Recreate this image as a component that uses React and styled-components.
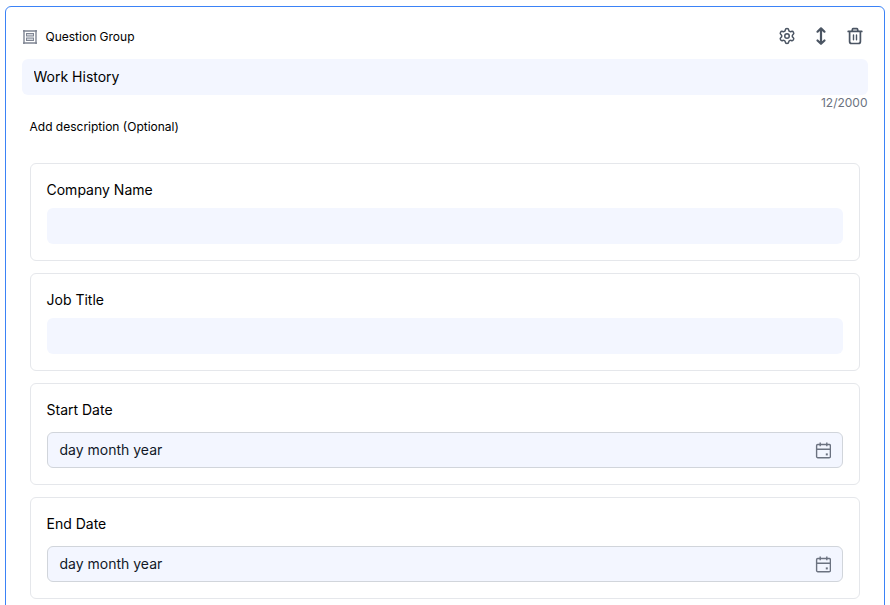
import { useState } from "react";
import styled, { createGlobalStyle } from "styled-components";
import { Settings } from "lucide-react";

const MAX_LENGTH = 2000;

const QUESTIONS = [
  { id: "company", label: "Company Name", type: "text" },
  { id: "title", label: "Job Title", type: "text" },
  { id: "start", label: "Start Date", type: "date" },
  { id: "end", label: "End Date", type: "date" },
];

function GroupIcon() {
  return (
    <svg width="14" height="14" viewBox="0 0 14 14" fill="none" stroke="#7f8593">
      <path d="M0 1h14M0 13h14M1 0v14M13 0v14" strokeWidth="1.4" />
      <rect x="3.5" y="3.5" width="7" height="2.5" fill="#d3d6dc" />
      <rect x="3.5" y="8" width="7" height="2.5" fill="#d3d6dc" />
    </svg>
  );
}

function MoveIcon() {
  return (
    <svg
      width="20"
      height="20"
      viewBox="0 0 20 20"
      fill="none"
      stroke="currentColor"
      strokeWidth="2.2"
      strokeLinecap="round"
      strokeLinejoin="round"
    >
      <path d="M10 2.8v14.6M6.5 5.7 10 2.4l3.5 3.3M6.5 14.5l3.5 3.3 3.5-3.3" />
    </svg>
  );
}

function TrashIcon() {
  return (
    <svg
      width="20"
      height="20"
      viewBox="0 0 20 20"
      fill="none"
      stroke="currentColor"
      strokeWidth="1.7"
      strokeLinecap="round"
      strokeLinejoin="round"
    >
      <path d="M3.2 5.4h13.6M7 5.2l.5-2.1q.2-.5.7-.5h3.6q.5 0 .7.5l.5 2.1" />
      <path d="M4.6 5.8v9.7q0 2 2 2h6.8q2 0 2-2V5.8" />
      <path d="M8.5 9v4.8M11.5 9v4.8" strokeWidth="1.4" />
    </svg>
  );
}

function CalendarIcon() {
  return (
    <svg width="16" height="17" viewBox="0 0 16 17" fill="none" stroke="#6b7280" strokeWidth="1.4">
      <rect x="1.6" y="2.5" width="13.8" height="13.2" rx="1.2" />
      <path d="M1.6 7.3h13.8M5.2 0.6v3.7M11.8 0.6v3.7" />
      <rect x="10.8" y="11.4" width="2" height="2" fill="#6b7280" stroke="none" />
    </svg>
  );
}

function Question({ label, type }) {
  return (
    <QuestionCard>
      <Label>{label}</Label>
      {type === "date" ? (
        <DateField>
          <DateText>day month year</DateText>
          <CalendarIcon />
        </DateField>
      ) : (
        <TextField aria-label={label} />
      )}
    </QuestionCard>
  );
}

function App() {
  const [title, setTitle] = useState("Work History");

  return (
    <>
      <GlobalStyle />
      <Group>
        <Header>
          <GroupIcon />
          <GroupName>Question Group</GroupName>
          <Actions>
            <IconButton type="button" aria-label="Settings">
              <Settings size={18} />
            </IconButton>
            <IconButton type="button" aria-label="Move">
              <MoveIcon />
            </IconButton>
            <IconButton type="button" aria-label="Delete">
              <TrashIcon />
            </IconButton>
          </Actions>
        </Header>
        <TitleInput
          aria-label="Title"
          value={title}
          maxLength={MAX_LENGTH}
          onChange={(e) => setTitle(e.target.value)}
        />
        <Counter>
          {title.length}/{MAX_LENGTH}
        </Counter>
        <Description>Add description (Optional)</Description>
        <QuestionList>
          {QUESTIONS.map((q) => (
            <Question key={q.id} label={q.label} type={q.type} />
          ))}
        </QuestionList>
      </Group>
    </>
  );
}

const GlobalStyle = createGlobalStyle`
  * {
    box-sizing: border-box;
  }

  body {
    margin: 0;
    height: 100vh;
    overflow: hidden;
    background: #fff;
    color: #000;
    font-family: Inter, "Liberation Sans", sans-serif;
  }
`;

const Group = styled.section`
  display: flex;
  flex-direction: column;
  margin: 6px 5px 0;
  padding: 16px 16px 24px;
  border: 1px solid #3b82f6;
  border-radius: 6px;
`;

const Header = styled.header`
  display: flex;
  align-items: center;
  height: 28px;
  padding-left: 1px;
`;

const GroupName = styled.span`
  margin-left: 8.5px;
  font-size: 12px;
  line-height: 16px;
`;

const Actions = styled.div`
  display: flex;
  gap: 14px;
  margin: 0 3px 2px auto;
`;

const IconButton = styled.button`
  display: flex;
  align-items: center;
  justify-content: center;
  width: 20px;
  height: 20px;
  padding: 0;
  border: none;
  background: none;
  color: #4b5563;
  cursor: pointer;
`;

const TextField = styled.input`
  display: block;
  width: 100%;
  height: 36px;
  padding: 0 11.5px 1px;
  border: none;
  border-radius: 6px;
  outline: none;
  background: #f3f6ff;
  color: #000;
  font: inherit;
  font-size: 14px;
`;

const TitleInput = styled(TextField)`
  margin-top: 8px;
`;

const Counter = styled.div`
  height: 16px;
  padding-right: 0.5px;
  color: #6b7280;
  font-size: 12px;
  line-height: 16px;
  text-align: right;
`;

const Description = styled.p`
  margin: 8px 7.5px 0;
  font-size: 12px;
  line-height: 16px;
`;

const QuestionList = styled.div`
  display: flex;
  flex-direction: column;
  gap: 12px;
  margin: 28px 8px 0;
`;

const QuestionCard = styled.div`
  padding: 16px;
  border: 1px solid #e5e7eb;
  border-radius: 6px;
`;

const Label = styled.div`
  margin: 0 0 8px -0.5px;
  font-size: 14px;
  line-height: 20px;
`;

const DateField = styled.div`
  display: flex;
  align-items: center;
  justify-content: space-between;
  height: 36px;
  margin-top: 12px;
  padding: 0 11px 0 11.5px;
  border: 1px solid #d1d5db;
  border-radius: 6px;
  background: #f3f6ff;
  color: #111827;
  font-size: 14px;
`;

const DateText = styled.span`
  padding-bottom: 1px;
  line-height: 20px;
`;

export default App;
